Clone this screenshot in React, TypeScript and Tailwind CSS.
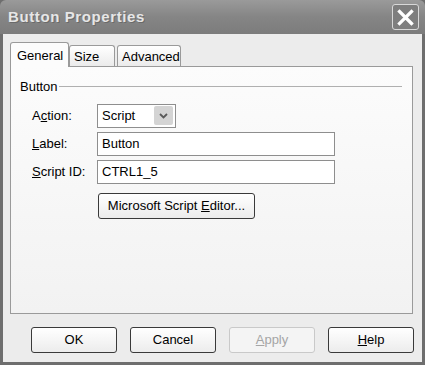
import React from "react";

const font = { fontFamily: "'Liberation Sans', Arial, sans-serif" };

function DialogButton({ children, disabled }: { children: React.ReactNode; disabled?: boolean }) {
  return (
    <div
      className={
        "w-[86px] h-[26px] flex items-center justify-center rounded-[3px] border text-[13px] " +
        (disabled
          ? "border-[#c9c9c9] text-[#a5a5a5] bg-[#f4f4f4]"
          : "border-[#3a3a3a] text-black bg-gradient-to-b from-white to-[#ececec]")
      }
    >
      <span>{children}</span>
    </div>
  );
}

function Tab({ label, active, w }: { label: string; active?: boolean; w: string }) {
  if (active) {
    return (
      <div className={`${w} h-[25px] -mb-px relative z-10 bg-[#fcfcfc] border border-b-0 border-[#9a9a9a] rounded-t-[3px] flex items-start pt-[3px] pl-[6px] text-[13px]`}>
        {label}
      </div>
    );
  }
  return (
    <div className={`${w} h-[21px] bg-gradient-to-b from-white to-[#ebebeb] border border-b-0 border-[#9a9a9a] rounded-t-[3px] flex items-center pl-[4px] pt-[2px] text-[13px]`}>
      {label}
    </div>
  );
}

export default function App() {
  return (
    <div className="w-[425px] h-[365px] flex flex-col bg-[#6e6e6e] select-none" style={font}>
      {/* title bar */}
      <div className="h-[34px] shrink-0 flex items-center justify-between pl-[8px] pr-[6px] bg-gradient-to-b from-[#9a9a9a] via-[#858585] to-[#7c7c7c] rounded-t-[6px]">
        <span className="text-[15px] font-bold text-[#e6e6e6] tracking-[0.6px] [text-shadow:1px_1px_0_#6a6a6a]">
          Button Properties
        </span>
        <div className="w-[27px] h-[26px] rounded-[3px] border border-[#d8d8d8] bg-[#7e7e7e] flex items-center justify-center">
          <svg width="17" height="17" viewBox="0 0 17 17">
            <path d="M2.5 2.5 L14.5 14.5 M14.5 2.5 L2.5 14.5" stroke="#ffffff" strokeWidth="3.2" strokeLinecap="square" />
          </svg>
        </div>
      </div>
      {/* body */}
      <div className="flex-1 mx-[3px] mb-[3px] bg-[#ececec] flex flex-col pt-[8px] px-[7px]">
        {/* tabs */}
        <div className="flex items-end h-[24px]">
          <Tab label="General" active w="w-[59px]" />
          <Tab label="Size" w="w-[46px]" />
          <div className="w-[2px]" />
          <Tab label="Advanced" w="w-[64px]" />
        </div>
        {/* panel */}
        <div className="w-[403px] h-[248px] bg-gradient-to-b from-[#fcfcfc] to-[#f2f2f2] border border-[#9a9a9a] pt-[10px] px-[9px] text-[13px]">
          <div className="flex items-center">
            <span>Button</span>
            <div className="flex-1 h-px bg-[#b0b0b0] ml-[1px] mr-[1px]" />
          </div>
          <div className="mt-[7px] pl-[12px] flex flex-col">
            <div className="flex items-center h-[24px]">
              <span className="w-[65px]">
                A<u>c</u>tion:
              </span>
              <div className="w-[79px] h-[24px] bg-white border border-[#8e8e8e] flex items-center justify-between pl-[4px] pr-[2px]">
                <span>Script</span>
                <div className="w-[19px] h-[19px] bg-[#d4d4d4] rounded-[2px] flex items-center justify-center">
                  <svg width="9" height="6" viewBox="0 0 9 6">
                    <path d="M1 1 L4.5 4.5 L8 1" stroke="#5a5a5a" strokeWidth="1.8" fill="none" />
                  </svg>
                </div>
              </div>
            </div>
            <div className="flex items-center h-[24px] mt-[4px]">
              <span className="w-[65px]">
                <u>L</u>abel:
              </span>
              <div className="w-[238px] h-[24px] bg-white border border-[#8e8e8e] flex items-center pl-[4px]">Button</div>
            </div>
            <div className="flex items-center h-[24px] mt-[4px]">
              <span className="w-[65px]">
                <u>S</u>cript ID:
              </span>
              <div className="w-[238px] h-[24px] bg-white border border-[#8e8e8e] flex items-center pl-[4px]">CTRL1_5</div>
            </div>
            <div className="ml-[66px] mt-[9px] w-[157px] h-[26px] rounded-[3px] border border-[#3a3a3a] bg-gradient-to-b from-white to-[#ececec] flex items-center justify-center">
              <span>
                Microsoft Script <u>E</u>ditor...
              </span>
            </div>
          </div>
        </div>
        {/* buttons */}
        <div className="flex mt-[13px] pl-[21px] gap-[13px]">
          <DialogButton>OK</DialogButton>
          <DialogButton>Cancel</DialogButton>
          <DialogButton disabled>
            <u>A</u>pply
          </DialogButton>
          <DialogButton>
            <u>H</u>elp
          </DialogButton>
        </div>
      </div>
    </div>
  );
}
